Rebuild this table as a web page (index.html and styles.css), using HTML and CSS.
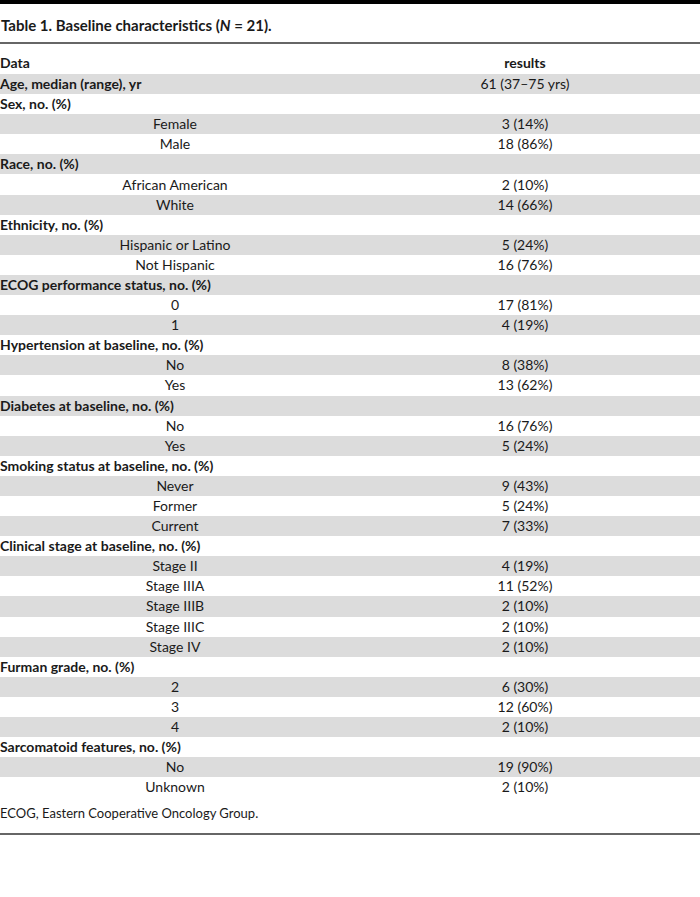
FILE: index.html
```html
<!DOCTYPE html>
<html>
<head>
<meta charset="utf-8">
<link rel="stylesheet" href="styles.css">
</head>
<body>
<div class="table-wrap">
  <div class="caption">Table 1. Baseline characteristics (<i>N</i> = 21).</div>
  <table class="data">
    <thead>
      <tr><th class="left">Data</th><th>results</th></tr>
    </thead>
    <tbody>
      <tr><td class="group">Age, median (range), yr</td><td>61 (37–75 yrs)</td></tr>
      <tr><td class="group">Sex, no. (%)</td><td></td></tr>
      <tr><td>Female</td><td>3 (14%)</td></tr>
      <tr><td>Male</td><td>18 (86%)</td></tr>
      <tr><td class="group">Race, no. (%)</td><td></td></tr>
      <tr><td>African American</td><td>2 (10%)</td></tr>
      <tr><td>White</td><td>14 (66%)</td></tr>
      <tr><td class="group">Ethnicity, no. (%)</td><td></td></tr>
      <tr><td>Hispanic or Latino</td><td>5 (24%)</td></tr>
      <tr><td>Not Hispanic</td><td>16 (76%)</td></tr>
      <tr><td class="group">ECOG performance status, no. (%)</td><td></td></tr>
      <tr><td>0</td><td>17 (81%)</td></tr>
      <tr><td>1</td><td>4 (19%)</td></tr>
      <tr><td class="group">Hypertension at baseline, no. (%)</td><td></td></tr>
      <tr><td>No</td><td>8 (38%)</td></tr>
      <tr><td>Yes</td><td>13 (62%)</td></tr>
      <tr><td class="group">Diabetes at baseline, no. (%)</td><td></td></tr>
      <tr><td>No</td><td>16 (76%)</td></tr>
      <tr><td>Yes</td><td>5 (24%)</td></tr>
      <tr><td class="group">Smoking status at baseline, no. (%)</td><td></td></tr>
      <tr><td>Never</td><td>9 (43%)</td></tr>
      <tr><td>Former</td><td>5 (24%)</td></tr>
      <tr><td>Current</td><td>7 (33%)</td></tr>
      <tr><td class="group">Clinical stage at baseline, no. (%)</td><td></td></tr>
      <tr><td>Stage II</td><td>4 (19%)</td></tr>
      <tr><td>Stage IIIA</td><td>11 (52%)</td></tr>
      <tr><td>Stage IIIB</td><td>2 (10%)</td></tr>
      <tr><td>Stage IIIC</td><td>2 (10%)</td></tr>
      <tr><td>Stage IV</td><td>2 (10%)</td></tr>
      <tr><td class="group">Furman grade, no. (%)</td><td></td></tr>
      <tr><td>2</td><td>6 (30%)</td></tr>
      <tr><td>3</td><td>12 (60%)</td></tr>
      <tr><td>4</td><td>2 (10%)</td></tr>
      <tr><td class="group">Sarcomatoid features, no. (%)</td><td></td></tr>
      <tr><td>No</td><td>19 (90%)</td></tr>
      <tr><td>Unknown</td><td>2 (10%)</td></tr>
    </tbody>
  </table>
  <div class="footnote">ECOG, Eastern Cooperative Oncology Group.</div>
</div>
</body>
</html>
```

FILE: styles.css
```css
html, body {
  margin: 0;
  padding: 0;
  background: #ffffff;
}
body {
  font-family: Lato, "Open Sans", sans-serif;
  color: #1a1a1a;
  font-size: 14px;
}
.table-wrap {
  width: 700px;
  border-top: 4px solid #000;
  border-bottom: 2px solid #666;
}
.caption {
  font-weight: 700;
  font-size: 15px;
  line-height: 20px;
  padding: 11px 0 7px 1px;
  border-bottom: 2px solid #666;
}
.caption i {
  font-style: italic;
}
.data {
  width: 700px;
  border-collapse: collapse;
  table-layout: fixed;
}
.data th {
  font-weight: 700;
  height: 30px;
  padding: 0;
  vertical-align: bottom;
  line-height: 20px;
  padding-bottom: 1px;
  box-sizing: border-box;
  text-align: center;
}
.data th.left {
  text-align: left;
}
.data td {
  height: 20.1px;
  padding: 0;
  line-height: 20px;
  text-align: center;
  width: 350px;
}
.data td.group {
  text-align: left;
  font-weight: 700;
}
.data tbody tr:nth-child(odd) {
  background: #dcdcdc;
}
.footnote {
  font-size: 13px;
  line-height: 20px;
  padding: 6px 0 10px 0;
}
```
